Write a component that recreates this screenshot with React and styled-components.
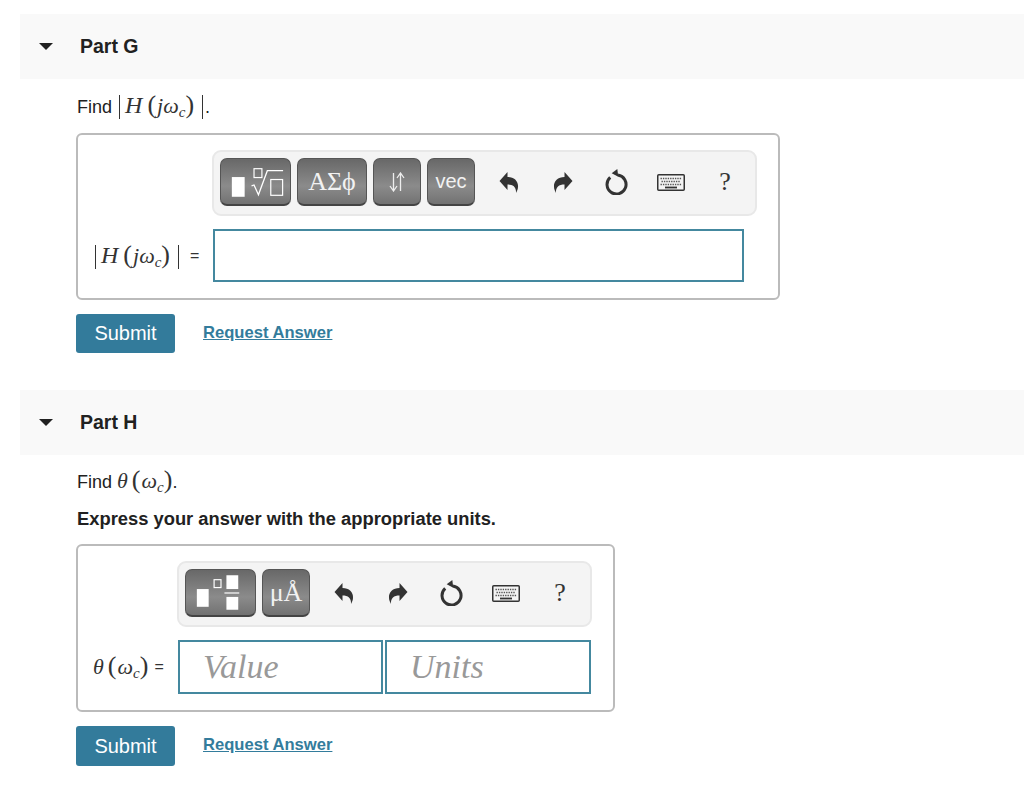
import React from 'react';
import styled, { createGlobalStyle } from 'styled-components';

const GlobalStyle = createGlobalStyle`
  html, body {
    margin: 0;
    background: #fff;
    color: #212121;
    font-family: "Liberation Sans", Arial, sans-serif;
  }
`;

const Page = styled.main`
  padding-top: 14px;
  padding-left: 20px;
`;

const Part = styled.section`
  margin-bottom: 37px;
`;

const PartHeader = styled.header`
  display: flex;
  align-items: center;
  height: 65px;
  background: #f9f9f9;
`;

const Caret = styled.span`
  width: 0;
  height: 0;
  margin-left: 19px;
  margin-right: 26px;
  border-left: 7.5px solid transparent;
  border-right: 7.5px solid transparent;
  border-top: 7px solid #212121;
`;

const PartTitle = styled.h2`
  margin: 0 0 0 1px;
  font-size: 19.5px;
  font-weight: 700;
`;

const PartBody = styled.div`
  padding-left: 56px;
`;

const Prompt = styled.p`
  height: 26px;
  margin: 13px 0 ${({ $after }) => $after}px 1px;
  font-size: 18px;
  line-height: 26px;
`;

const Instruction = styled.p`
  margin: 0 0 12px 1px;
  font-size: 18.35px;
  font-weight: 700;
  line-height: 26px;
`;

const AnswerBox = styled.div`
  box-sizing: border-box;
  width: ${({ $width }) => $width}px;
  padding: 15px 15px 16px;
  border: 2px solid #bbb;
  border-radius: 6px;
`;

const Toolbar = styled.div`
  box-sizing: border-box;
  display: flex;
  width: ${({ $width }) => $width}px;
  height: 66px;
  margin-left: ${({ $left }) => $left}px;
  padding: 6px 0 6px 6px;
  border: 2px solid #e8e8e8;
  border-radius: 9px;
  background: #f4f4f4;
`;

const PaletteGroup = styled.div`
  display: flex;
  flex-shrink: 0;
  gap: 6px;
  margin-right: 7px;
`;

const Palette = styled.button`
  display: flex;
  align-items: center;
  justify-content: center;
  box-sizing: border-box;
  width: ${({ $width }) => $width}px;
  height: 48px;
  padding: 0;
  border: 1px solid #555;
  border-bottom: 2px solid #444;
  border-radius: 7px;
  background: linear-gradient(#686868, #8b8b8b 60%, #727272);
  color: #fff;
`;

const PaletteSerif = styled.span`
  font-family: "Liberation Serif", serif;
  font-size: 26px;
  color: #f2f2f2;
`;

const PaletteSans = styled.span`
  font-size: 20px;
  color: #f2f2f2;
`;

const ToolButton = styled.span`
  display: flex;
  flex-shrink: 0;
  align-items: center;
  justify-content: center;
  width: 54px;
  height: 48px;
  color: #333;
`;

const HelpMark = styled.span`
  font-family: "Liberation Serif", serif;
  font-size: 26px;
  color: #333;
`;

const EntryRow = styled.div`
  display: flex;
  align-items: center;
  gap: 2px;
  margin-top: 13px;
`;

const EntryLabel = styled.div`
  box-sizing: border-box;
  display: flex;
  align-items: center;
  width: ${({ $width }) => $width}px;
  font-size: 16px;
  color: #333;
`;

const Entry = styled.div`
  box-sizing: border-box;
  display: flex;
  align-items: center;
  width: ${({ $width }) => $width}px;
  height: ${({ $height }) => $height}px;
  padding-left: 23px;
  border: 2px solid #44889f;
  background: #fff;
  font-family: "Liberation Serif", serif;
  font-style: italic;
  font-size: 34px;
  color: #999;
`;

const Actions = styled.div`
  display: flex;
  align-items: center;
  gap: 28px;
  margin-top: 14px;
`;

const SubmitButton = styled.button`
  width: 99px;
  height: ${({ $height }) => $height}px;
  padding: 0;
  border: none;
  border-radius: 3px;
  background: #337b9b;
  color: #fff;
  font-family: inherit;
  font-size: 20px;
`;

const AnswerLink = styled.a`
  margin-bottom: 2px;
  color: #337c9c;
  font-size: 16.6px;
  font-weight: 700;
  text-decoration: underline;
`;

const MathText = styled.span`
  font-family: "Liberation Serif", "DejaVu Serif", serif;
  font-size: 22px;
  color: #333;
  white-space: nowrap;
`;

const MathVar = styled.i`
  font-style: italic;
  font-size: ${({ $size }) => $size || 22}px;
`;

const MathSub = styled.i`
  display: inline-block;
  font-size: 15px;
  line-height: 0;
  transform: translateY(4px);
`;

const Paren = styled.span`
  display: inline-block;
  margin: ${({ $margin }) => $margin};
  font-size: 26px;
  font-weight: 400;
  line-height: 0;
`;

const Bar = styled.span`
  display: inline-block;
  width: 1px;
  height: 24px;
  margin: ${({ $margin }) => $margin};
  background: #333;
  vertical-align: -6px;
`;

const Equals = styled.span`
  margin-left: ${({ $left }) => $left}px;
`;

const MagnitudeMath = () => (
  <MathText>
    <Bar $margin="0 5px 0 2px" />
    <MathVar $size={24}>H</MathVar>
    <Paren $margin="0 1px 0 5px">(</Paren>
    <MathVar>jω</MathVar>
    <MathSub>c</MathSub>
    <Paren>)</Paren>
    <Bar $margin="0 2px 0 8px" />
  </MathText>
);

const ThetaMath = () => (
  <MathText>
    <MathVar>θ</MathVar>
    <Paren $margin="0 1px 0 4px">(</Paren>
    <MathVar>ω</MathVar>
    <MathSub>c</MathSub>
    <Paren>)</Paren>
  </MathText>
);

const UndoIcon = ({ flip }) => (
  <svg width="20" height="22" viewBox="0 0 20 22" style={flip ? { transform: 'scaleX(-1)' } : undefined}>
    <path
      fill="#333"
      d="M0.5 10 L8.5 1 L8.5 6 C15 6 19.5 10 19 16 C19 18 18 20 17 22 C17.5 16 14 13.5 8.5 13.5 L8.5 19 Z"
    />
  </svg>
);

const ReloadIcon = () => (
  <svg width="24" height="26" viewBox="0 0 24 26">
    <path
      fill="none"
      stroke="#333"
      strokeWidth="3"
      d="M5.2 8.4 A9.5 9.5 0 1 0 13 6.1"
    />
    <path fill="#333" d="M6.7 4.3 L12.3 0 L13.3 7.7 Z" />
  </svg>
);

const KeyboardIcon = () => (
  <svg width="28" height="17" viewBox="0 0 28 17">
    <rect x="0.75" y="0.75" width="26.5" height="15.5" rx="1" fill="#f4f4f4" stroke="#333" strokeWidth="1.5" />
    <path
      stroke="#555"
      strokeWidth="1.6"
      strokeDasharray="1.4 1"
      fill="none"
      d="M3.5 4.5 H24.5 M4.5 7.5 H23.5 M3.5 10.5 H24.5"
    />
    <path stroke="#333" strokeWidth="1.8" d="M8 13.5 H20" />
  </svg>
);

const RadicalIcon = () => (
  <svg width="70" height="45" viewBox="0 0 70 45">
    <rect x="11" y="18" width="13" height="20" fill="#fff" />
    <rect x="33.5" y="9.5" width="8" height="9" fill="none" stroke="#fff" strokeWidth="1.2" />
    <path d="M31 27 L33.5 26 L38 36 L47 11.5 H63" fill="none" stroke="#fff" strokeWidth="1.3" />
    <rect x="50.5" y="20.5" width="12" height="16" fill="none" stroke="#fff" strokeWidth="1.2" />
  </svg>
);

const TemplatesIcon = () => (
  <svg width="70" height="45" viewBox="0 0 70 45">
    <rect x="11" y="19" width="12" height="18" fill="#fff" />
    <rect x="28.5" y="9.5" width="7" height="8" fill="none" stroke="#fff" strokeWidth="1.2" />
    <rect x="41" y="5" width="12" height="14" fill="#fff" />
    <path d="M39 23 H54" stroke="#fff" strokeWidth="1.2" />
    <rect x="41" y="27" width="12" height="13" fill="#fff" />
  </svg>
);

const ArrowsIcon = () => (
  <svg width="18" height="20" viewBox="0 0 18 20">
    <path d="M5.5 1 V18 M2 14 L5.5 19 L9 14" fill="none" stroke="#eee" strokeWidth="1.3" />
    <path d="M12.5 19 V2 M9 6 L12.5 1 L16 6" fill="none" stroke="#eee" strokeWidth="1.3" />
  </svg>
);

const ToolIcons = () => (
  <>
    <ToolButton><UndoIcon /></ToolButton>
    <ToolButton><UndoIcon flip /></ToolButton>
    <ToolButton><ReloadIcon /></ToolButton>
    <ToolButton><KeyboardIcon /></ToolButton>
    <ToolButton><HelpMark>?</HelpMark></ToolButton>
  </>
);

export default function App() {
  return (
    <>
      <GlobalStyle />
      <Page>
        <Part>
          <PartHeader>
            <Caret />
            <PartTitle>Part G</PartTitle>
          </PartHeader>
          <PartBody>
            <Prompt $after={15}>
              Find <MagnitudeMath />.
            </Prompt>
            <AnswerBox $width={704}>
              <Toolbar $width={545} $left={119}>
                <PaletteGroup>
                  <Palette $width={71}><RadicalIcon /></Palette>
                  <Palette $width={70}><PaletteSerif>ΑΣϕ</PaletteSerif></Palette>
                  <Palette $width={48}><ArrowsIcon /></Palette>
                  <Palette $width={48}><PaletteSans>vec</PaletteSans></Palette>
                </PaletteGroup>
                <ToolIcons />
              </Toolbar>
              <EntryRow>
                <EntryLabel $width={118}>
                  <MagnitudeMath />
                  <Equals $left={9}>=</Equals>
                </EntryLabel>
                <Entry $width={531} $height={53} />
              </EntryRow>
            </AnswerBox>
            <Actions>
              <SubmitButton $height={39}>Submit</SubmitButton>
              <AnswerLink href="#">Request Answer</AnswerLink>
            </Actions>
          </PartBody>
        </Part>
        <Part>
          <PartHeader>
            <Caret />
            <PartTitle>Part H</PartTitle>
          </PartHeader>
          <PartBody>
            <Prompt $after={12}>
              Find <ThetaMath />.
            </Prompt>
            <Instruction>Express your answer with the appropriate units.</Instruction>
            <AnswerBox $width={539}>
              <Toolbar $width={415} $left={84}>
                <PaletteGroup>
                  <Palette $width={71}><TemplatesIcon /></Palette>
                  <Palette $width={48}><PaletteSerif>μÅ</PaletteSerif></Palette>
                </PaletteGroup>
                <ToolIcons />
              </Toolbar>
              <EntryRow>
                <EntryLabel $width={83}>
                  <ThetaMath />
                  <Equals $left={6}>=</Equals>
                </EntryLabel>
                <Entry $width={205} $height={54}>Value</Entry>
                <Entry $width={206} $height={54}>Units</Entry>
              </EntryRow>
            </AnswerBox>
            <Actions>
              <SubmitButton $height={40}>Submit</SubmitButton>
              <AnswerLink href="#">Request Answer</AnswerLink>
            </Actions>
          </PartBody>
        </Part>
      </Page>
    </>
  );
}
